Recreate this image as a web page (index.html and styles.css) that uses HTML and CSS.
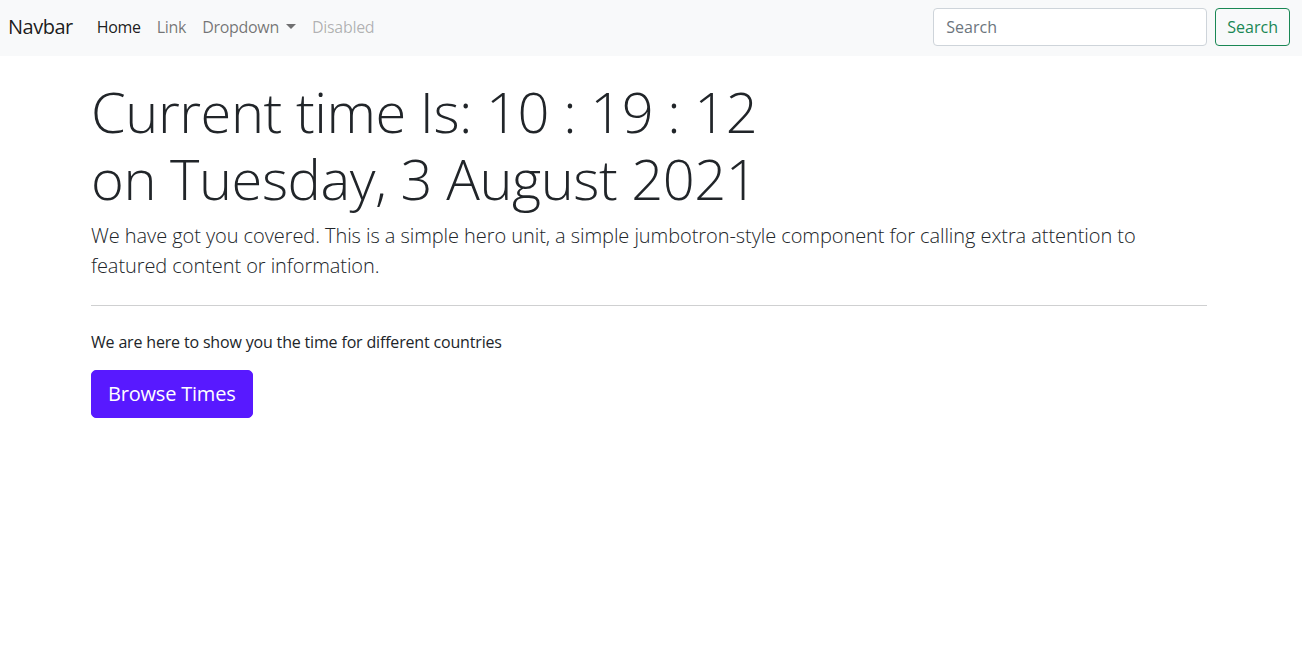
FILE: index.html
```html
<!DOCTYPE html>
<html lang="en">
<head>
<meta charset="utf-8">
<title>Time</title>
<link rel="stylesheet" href="styles.css">
</head>
<body>
<nav class="navbar">
  <div class="nav-inner">
    <a class="brand" href="#">Navbar</a>
    <ul class="nav">
      <li><a class="nav-link active" href="#">Home</a></li>
      <li><a class="nav-link" href="#">Link</a></li>
      <li><a class="nav-link dropdown" href="#">Dropdown</a></li>
      <li><a class="nav-link disabled" href="#">Disabled</a></li>
    </ul>
    <form class="search">
      <input class="search-input" type="search" placeholder="Search">
      <button class="search-btn" type="button">Search</button>
    </form>
  </div>
</nav>
<main class="container">
  <h1 class="display">Current time Is: 10 : 19 : 12<br>on Tuesday, 3 August 2021</h1>
  <p class="lead">We have got you covered. This is a simple hero unit, a simple jumbotron-style component for calling extra attention to featured content or information.</p>
  <hr class="rule">
  <p class="note">We are here to show you the time for different countries</p>
  <a class="btn-primary" href="#">Browse Times</a>
</main>
</body>
</html>
```

FILE: styles.css
```css
* { box-sizing: border-box; }
html, body { margin: 0; padding: 0; }
body {
  font-family: "Open Sans", "Noto Sans", sans-serif;
  font-size: 16px;
  line-height: 1.5;
  color: #212529;
  background: #fff;
}
a { text-decoration: none; }
.navbar {
  background: #f8f9fa;
  padding: 8px 0;
}
.nav-inner {
  display: flex;
  align-items: center;
  padding: 0 12px 0 8px;
}
.brand {
  font-size: 20px;
  line-height: 30px;
  padding: 4px 0 6px;
  margin-right: 16px;
  letter-spacing: -0.5px;
  color: rgba(0,0,0,.9);
}
.nav {
  display: flex;
  list-style: none;
  margin: 0;
  padding: 0;
  flex: 1;
}
.nav-link {
  display: block;
  padding: 7px 8px 9px;
  letter-spacing: -0.3px;
  color: rgba(0,0,0,.55);
}
.nav-link.active { color: rgba(0,0,0,.9); }
.nav-link.disabled { color: rgba(0,0,0,.3); }
.dropdown::after {
  content: "";
  display: inline-block;
  margin-left: 7px;
  vertical-align: 4px;
  border-top: 5px solid;
  border-right: 5px solid transparent;
  border-left: 5px solid transparent;
}
.search { display: flex; align-items: center; margin-top: -2px; }
.search-input {
  width: 274px;
  height: 38px;
  padding: 6px 12px;
  font: inherit;
  font-size: 16px;
  color: #212529;
  background: #fff;
  border: 1px solid #ced4da;
  border-radius: 4px;
  margin-right: 8px;
}
.search-input::placeholder { color: #6c757d; }
.search-btn {
  height: 38px;
  padding: 6px 11px;
  font: inherit;
  font-size: 16px;
  color: #198754;
  background: transparent;
  border: 1px solid #198754;
  border-radius: 4px;
}
.container {
  width: 1144px;
  margin: 0 auto;
  padding: 22px 16px 0 12px;
}
.display {
  font-size: 56px;
  font-weight: 300;
  line-height: 1.2;
  letter-spacing: -0.45px;
  margin: 0 0 9px;
}
.lead {
  font-size: 20px;
  font-weight: 300;
  letter-spacing: -0.07px;
  margin: 0 0 16px;
}
.rule {
  border: 0;
  border-top: 1px solid #cfd0d1;
  margin: 24px 0;
}
.note { margin: 0 0 16px; letter-spacing: -0.17px; }
.btn-primary {
  display: inline-block;
  padding: 8px 16px;
  font-size: 20px;
  line-height: 30px;
  letter-spacing: -0.2px;
  color: #fff;
  background: #5819ff;
  border: 1px solid #5819ff;
  border-radius: 5px;
}
```
